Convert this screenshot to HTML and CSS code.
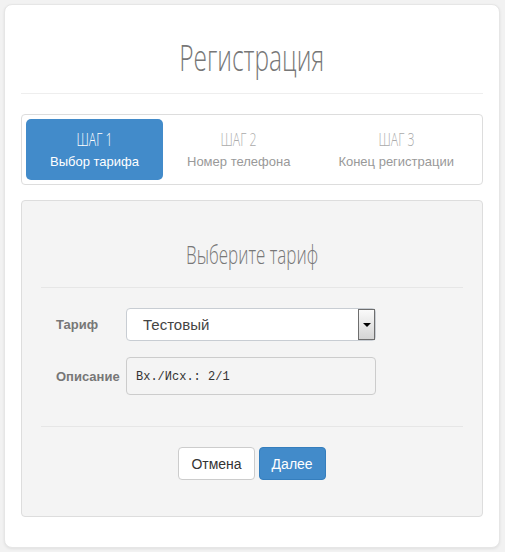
FILE: index.html
```html
<!DOCTYPE html>
<html lang="ru">
<head>
  <meta charset="UTF-8">
  <title>Регистрация</title>
  <link rel="stylesheet" href="styles.css">
</head>
<body>

<div class="card">
  <h1 class="title"><span class="narrow">Регистрация</span></h1>

  <div class="steps">
    <div class="step active">
      <div class="step-num"><span class="narrow">ШАГ 1</span></div>
      <div class="step-name">Выбор тарифа</div>
    </div>
    <div class="step">
      <div class="step-num"><span class="narrow">ШАГ 2</span></div>
      <div class="step-name">Номер телефона</div>
    </div>
    <div class="step">
      <div class="step-num"><span class="narrow">ШАГ 3</span></div>
      <div class="step-name">Конец регистрации</div>
    </div>
  </div>

  <div class="panel">
    <h2 class="panel-title"><span class="narrow">Выберите тариф</span></h2>

    <div class="form">
      <div class="row">
        <label class="label">Тариф</label>
        <div class="select">
          <span class="select-text">Тестовый</span>
          <span class="select-arrow"></span>
        </div>
      </div>
      <div class="row">
        <label class="label">Описание</label>
        <div class="field">Вх./Исх.: 2/1</div>
      </div>
    </div>

    <div class="actions">
      <button class="btn">Отмена</button>
      <button class="btn btn-primary">Далее</button>
    </div>
  </div>
</div>

</body>
</html>
```

FILE: styles.css
```css
body {
  margin: 0;
  background-color: #f2f2f2;
  font-family: 'Liberation Sans', Arial, sans-serif;
  font-size: 14px;
  color: #333;
}

.card {
  margin: 4px 5px 4px 4px;
  height: 544px;
  box-sizing: border-box;
  background-color: #fff;
  border: 1px solid #e6e6e6;
  border-radius: 8px;
  box-shadow: 0 1px 3px rgba(0, 0, 0, 0.08);
  padding: 0 16px;
}

.narrow {
  display: inline-block;
  font-family: 'Open Sans', sans-serif;
  font-weight: 300;
  transform: scaleX(0.68);
}

.title {
  margin: 0;
  padding: 28px 0 0;
  height: 60px;
  text-align: center;
  font-size: 36px;
  line-height: 50px;
  font-weight: normal;
  color: #777;
  border-bottom: 1px solid #eee;
}

.steps {
  display: flex;
  margin-top: 20px;
  padding: 4px;
  border: 1px solid #ddd;
  border-radius: 4px;
}

.step {
  flex: 1 1 auto;
  padding: 9px 10px 8px;
  text-align: center;
  border-radius: 5px;
  color: #999;
}

.step.active {
  background-color: #428bca;
  color: #fff;
}

.step-num {
  font-size: 18px;
  line-height: 22px;
  color: #aaa;
}

.step.active .step-num {
  color: #fff;
}

.step-name {
  margin-top: 1px;
  font-size: 13px;
  line-height: 20px;
}

.panel {
  margin-top: 15px;
  height: 317px;
  box-sizing: border-box;
  background-color: #f4f4f4;
  border: 1px solid #ddd;
  border-radius: 4px;
  padding: 0 19px;
}

.panel-title {
  margin: 0;
  padding-top: 36px;
  height: 50px;
  text-align: center;
  font-size: 25px;
  line-height: 34px;
  font-weight: normal;
  color: #777;
  border-bottom: 1px solid #e6e6e6;
}

.form {
  padding: 20px 0 31px;
  border-bottom: 1px solid #e6e6e6;
}

.row {
  display: flex;
  align-items: center;
  margin-bottom: 16px;
}

.row:last-child {
  margin-bottom: 0;
}

.label {
  width: 70px;
  padding-left: 15px;
  font-size: 13px;
  font-weight: bold;
  color: #777;
}

.select {
  display: flex;
  width: 250px;
  height: 33px;
  box-sizing: border-box;
  background-color: #fff;
  border: 1px solid #c8cdd3;
  border-radius: 4px;
}

.select-text {
  flex: 1;
  padding-left: 16px;
  line-height: 31px;
  font-size: 15px;
  color: #444;
}

.select-arrow {
  position: relative;
  width: 15px;
  background: linear-gradient(#fafafa, #d4d4d4);
  border: 1px solid #6e6e6e;
}

.select-arrow::after {
  content: '';
  position: absolute;
  left: 4px;
  top: 13px;
  border-left: 4px solid transparent;
  border-right: 4px solid transparent;
  border-top: 4px solid #000;
}

.field {
  width: 250px;
  height: 38px;
  box-sizing: border-box;
  padding-left: 9px;
  line-height: 38px;
  border: 1px solid #ccc;
  border-radius: 4px;
  font-family: 'Liberation Mono', monospace;
  font-size: 12px;
  color: #333;
}

.actions {
  display: flex;
  justify-content: center;
  gap: 4px;
  padding-top: 20px;
}

.btn {
  height: 33px;
  padding: 0 12px;
  font-family: 'Liberation Sans', Arial, sans-serif;
  font-size: 14px;
  color: #333;
  background-color: #fff;
  border: 1px solid #ccc;
  border-radius: 4px;
}

.btn-primary {
  color: #fff;
  background-color: #428bca;
  border-color: #357ebd;
}
```
